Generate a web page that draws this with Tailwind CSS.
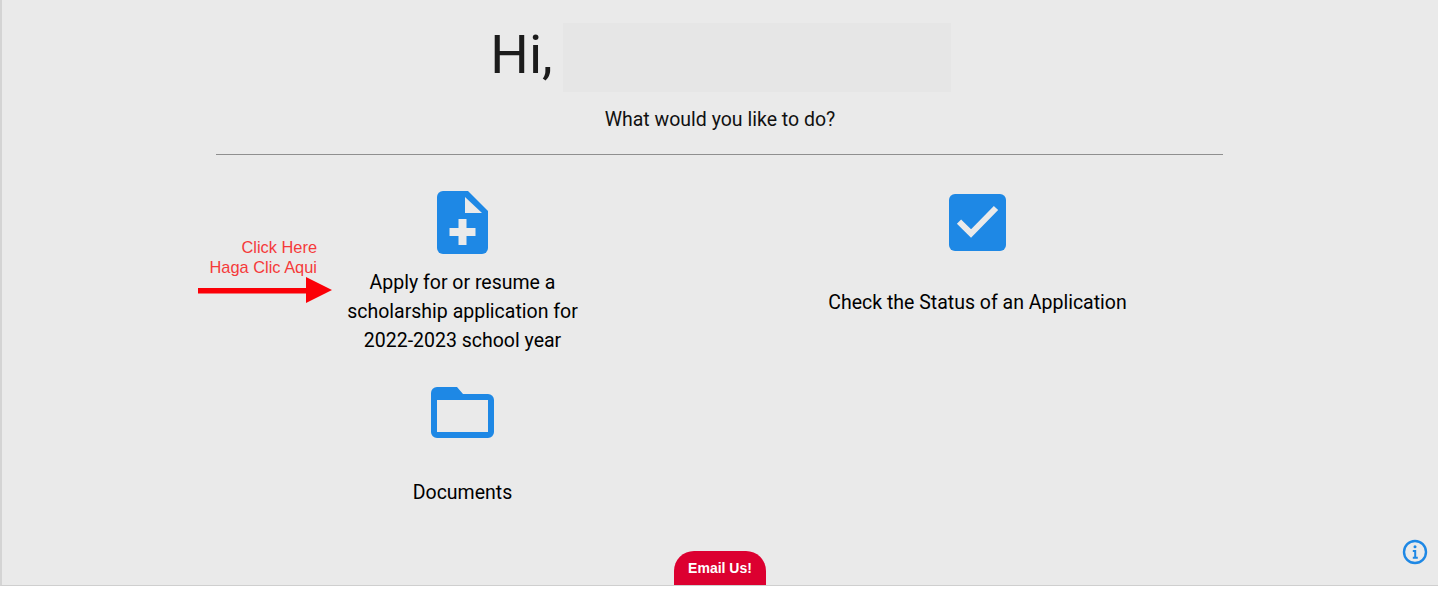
<!DOCTYPE html>
<html lang="en">
<head>
<meta charset="utf-8">
<title>Dashboard</title>
<script src="https://cdn.jsdelivr.net/npm/@tailwindcss/browser@4"></script>
</head>
<body class="bg-white font-['Roboto',sans-serif] overflow-hidden">
<div class="relative h-[591px] w-[1438px] overflow-hidden bg-white">
  <main class="relative h-[586px] border-b border-[#cfcfcf] border-l-2 border-l-[#d4d4d4] bg-[#eaeaea] pt-[23px] text-black">
    <div class="flex h-[69px] items-start justify-center gap-[10px] pl-[1px]">
      <h1 class="text-[54px] leading-[64px] font-normal text-[#1c1c1c]">Hi,</h1>
      <div class="h-[69px] w-[388px] bg-[#e6e6e6]"></div>
    </div>
    <p class="mt-[13px] text-center text-[19.5px] leading-[29px] text-[#111]">What would you like to do?</p>
    <hr class="mt-[20px] ml-[214px] w-[1007px] border-0 border-t border-[#8f8f8f]">
    <div class="relative mt-[36px] ml-[203px] grid w-[1030px] grid-cols-2 gap-y-[32px]">
      <a class="flex flex-col items-center">
        <svg class="h-[63px] w-[51px]" viewBox="0 0 51 63" aria-hidden="true">
          <path fill="#1e88e5" d="M6 0H31L51 20V57a6 6 0 0 1-6 6H6a6 6 0 0 1-6-6V6a6 6 0 0 1 6-6Z"/>
          <path fill="#eaeaea" d="M28 6 45 22H28Z"/>
          <path fill="#eaeaea" d="M21.500 28h8v9h9v8h-9v9h-8v-9h-9v-8h9Z"/>
        </svg>
        <span class="mt-[14px] flex h-[87px] items-center text-center text-[19.5px] leading-[29px]">Apply for or resume a<br>scholarship application for<br>2022-2023 school year</span>
      </a>
      <a class="flex flex-col items-center">
        <svg class="h-[63px] w-[57px]" viewBox="0 0 57 63" aria-hidden="true">
          <rect x="0" y="3" width="57" height="57" rx="6" fill="#1e88e5"/>
          <path fill="none" stroke="#eaeaea" stroke-width="6" d="M10 30.700 22 42.500 47 17"/>
        </svg>
        <span class="mt-[14px] flex h-[68px] items-center text-center text-[19.5px] leading-[29px]">Check the Status of an Application</span>
      </a>
      <a class="flex flex-col items-center">
        <svg class="h-[51px] w-[63px]" viewBox="0 0 63 51" aria-hidden="true">
          <path fill="#1e88e5" fill-rule="evenodd" d="M6 0H26L32 7H57a6 6 0 0 1 6 6V45a6 6 0 0 1-6 6H6a6 6 0 0 1-6-6V6a6 6 0 0 1 6-6ZM6 13V45H57V13Z"/>
        </svg>
        <span class="mt-[40px] text-center text-[19.5px] leading-[29px]">Documents</span>
      </a>
    </div>
    <!-- annotation over the page -->
    <div class="absolute top-[237px] left-[100px] w-[215px] text-right font-['Liberation_Sans',sans-serif] text-[16.400px] leading-[20px] text-[#f53a3a]">Click Here<br>Haga Clic Aqui</div>
    <svg class="absolute top-[277px] left-[196px] h-[26px] w-[134px]" viewBox="0 0 134 26" aria-hidden="true">
      <path fill="#fb0007" d="M0 11H108V0L134 13 108 26V16.500H0Z"/>
    </svg>
    <a class="absolute top-[551px] left-[672px] flex h-[34px] w-[92px] items-center justify-center rounded-t-[20px] bg-[#dc0030] font-['Liberation_Sans',sans-serif] text-[14px] font-bold text-white">Email Us!</a>
    <svg class="absolute top-[539px] left-[1399.500px] h-[26px] w-[26px]" viewBox="0 0 26 26" fill="none" aria-hidden="true">
      <circle cx="13" cy="13" r="11" stroke="#1e88e5" stroke-width="2.400"/>
      <circle cx="13" cy="7.800" r="1.500" fill="#1e88e5"/>
      <path stroke="#1e88e5" stroke-width="2" d="M10.800 12H13.200V18.500M10.800 18.800H15.800"/>
    </svg>
  </main>
</div>
</body>
</html>
